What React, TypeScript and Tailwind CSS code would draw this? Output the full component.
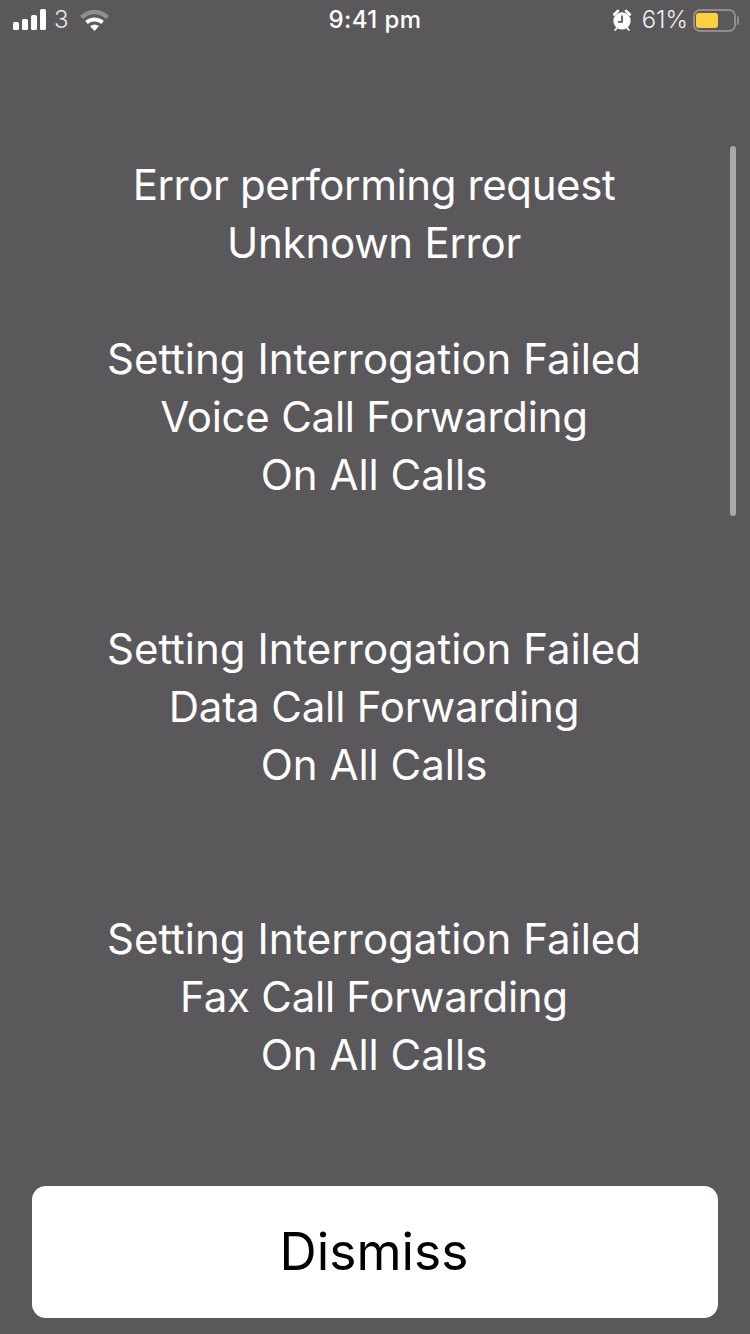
const failed = 'tracking-normal';
const mid = 'tracking-[-0.25px]';

const blocks = [
  {
    cls: 'h-[174px]',
    lines: [
      { text: 'Error performing request', cls: 'tracking-[-0.4px]' },
      { text: 'Unknown Error', cls: mid },
    ],
  },
  {
    cls: 'h-[290px]',
    lines: [
      { text: 'Setting Interrogation Failed', cls: failed },
      { text: 'Voice Call Forwarding', cls: mid },
      { text: 'On All Calls', cls: failed },
    ],
  },
  {
    cls: 'h-[290px]',
    lines: [
      { text: 'Setting Interrogation Failed', cls: failed },
      { text: 'Data Call Forwarding', cls: 'tracking-[-0.15px]' },
      { text: 'On All Calls', cls: failed },
    ],
  },
  {
    cls: 'h-[232px]',
    lines: [
      { text: 'Setting Interrogation Failed', cls: failed },
      { text: 'Fax Call Forwarding', cls: mid },
      { text: 'On All Calls', cls: failed },
    ],
  },
];

const StatusBar = () => (
  <div className="h-[40px] flex items-center justify-between text-white text-[24px] relative">
    <div className="flex items-center pl-[13px]">
      <svg width="34" height="22" viewBox="0 0 34 22" fill="white">
        <rect x="0" y="13" width="6" height="8" rx="1.5" />
        <rect x="9" y="10" width="6" height="11" rx="1.5" />
        <rect x="18" y="6" width="6" height="15" rx="1.5" />
        <rect x="27" y="0" width="6" height="21" rx="1.5" />
      </svg>
      <span className="ml-[7px] text-[#e8e8e8] font-light">3</span>
      <svg className="ml-[11px]" width="29" height="22" viewBox="0 0 29 22" fill="none">
        <path d="M1.5 8.5C9 1 20 1 27.5 8.5" stroke="#8f8d90" strokeWidth="4.5" />
        <path d="M6.5 13.5C11 9.5 18 9.5 22.5 13.5" stroke="white" strokeWidth="4" />
        <path d="M10 17C13 15 16 15 19 17L14.5 22Z" fill="white" />
      </svg>
    </div>
    <span className="absolute left-0 right-0 text-center font-medium tracking-[0.4px] pointer-events-none">9:41 pm</span>
    <div className="flex items-center pr-[11px]">
      <svg width="20" height="22" viewBox="0 0 22 24" fill="none">
        <circle cx="11" cy="13" r="9.5" fill="white" />
        <path d="M2.5 6L6.5 2M19.5 6L15.5 2" stroke="white" strokeWidth="3" strokeLinecap="round" />
        <path d="M11 7V14H6.5" stroke="#5a585b" strokeWidth="2" />
        <path d="M5 21L3.5 23M17 21L18.5 23" stroke="white" strokeWidth="2" strokeLinecap="round" />
      </svg>
      <span className="ml-[10px] text-[#f0f0f0] font-light">61%</span>
      <div className="ml-[5px] w-[43px] h-[23px] rounded-[7px] border-2 border-[#8f8d90] px-[1px] py-[2px]">
        <div className="w-[22px] h-full rounded-[3px] bg-[#fdd13d]" />
      </div>
      <div className="ml-[1px] w-[2px] h-[9px] rounded-r-full bg-[#8f8d90]" />
    </div>
  </div>
);

export default function App() {
  return (
    <div
      className="w-[750px] h-[1334px] bg-[#5a585b] relative overflow-hidden flex flex-col"
      style={{ fontFamily: 'Inter, "Liberation Sans", sans-serif' }}
    >
      <StatusBar />
      <div className="flex-1 pt-[116px] pr-[2px] text-center text-white text-[42px] leading-[58px] font-normal">
        {blocks.map((b, i) => (
          <div key={i} className={b.cls}>
            {b.lines.map((l) => (
              <div key={l.text} className={l.cls}>{l.text}</div>
            ))}
          </div>
        ))}
      </div>
      <div className="absolute left-[730px] top-[146px] w-[6px] h-[370px] rounded-full bg-[#a9a8aa]" />
      <div className="px-[32px] pb-[16px]">
        <button className="w-full h-[132px] bg-white rounded-[14px] text-black text-[51.5px] pr-[2px]">Dismiss</button>
      </div>
    </div>
  );
}
